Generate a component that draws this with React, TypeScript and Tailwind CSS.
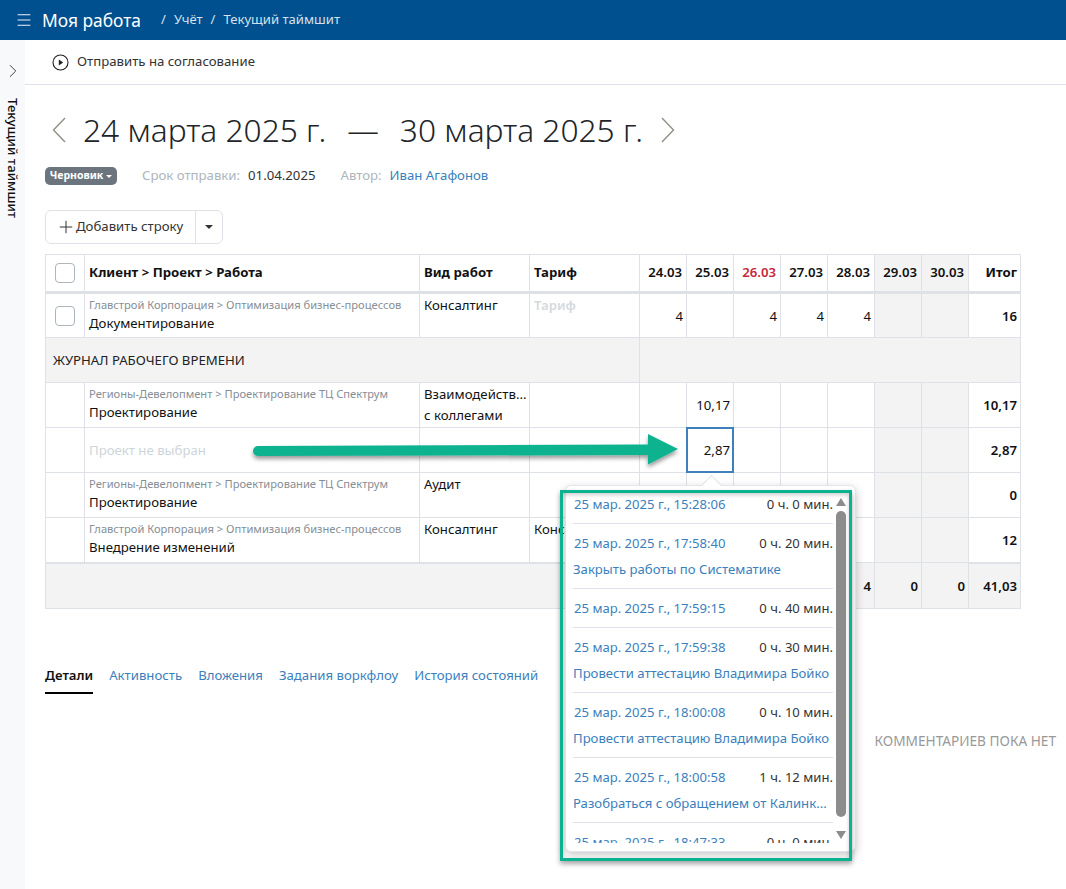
import React from "react";
import { Menu, ChevronRight, Plus } from "lucide-react";

const dayCols = ["24.03", "25.03", "26.03", "27.03", "28.03", "29.03", "30.03"];
const weekendBg = (i: number) => (i >= 5 ? "bg-[#f3f3f4]" : "");

function Box() {
  return <span className="block w-5 h-5 mx-auto rounded-[4px] border border-[#adb5bd] bg-white" />;
}

function Day({ i, v }: { i: number; v?: string }) {
  return (
    <td className={`border border-[#dee2e6] pl-1 pr-[3px] pt-[2px] align-middle text-right text-[13.2px] ${weekendBg(i)}`}>
      {v}
    </td>
  );
}

type RowData = {
  crumb?: string;
  work?: string;
  empty?: boolean;
  kind?: React.ReactNode;
  rate?: React.ReactNode;
  days: (string | undefined)[];
  total: string;
  check?: boolean;
  last?: boolean;
};

function Row({ r }: { r: RowData }) {
  const bottom = r.last ? "border-b-[2px]" : "";
  return (
    <tr className="h-[45px]">
      <td className={`border border-[#dee2e6] ${bottom}`}>{r.check && <Box />}</td>
      <td className={`border border-[#dee2e6] px-1 align-top overflow-hidden ${bottom}`}>
        {r.empty ? (
          <div className="pt-[13px] text-[13.2px] leading-[18px] text-[#ced4da]">Проект не выбран</div>
        ) : (
          <div className="pt-[2px]">
            <div className="text-[11.15px] leading-[18px] text-[#868e96] whitespace-nowrap">{r.crumb}</div>
            <div className="text-[13.2px] leading-[19px] text-[#111] whitespace-nowrap">{r.work}</div>
          </div>
        )}
      </td>
      <td className={`border border-[#dee2e6] px-1 pt-[1px] align-top text-[13.2px] leading-[21px] text-[#111] overflow-hidden ${bottom}`}>{r.kind}</td>
      <td className={`border border-[#dee2e6] px-1 pt-[1px] align-top text-[13.2px] leading-[21px] overflow-hidden whitespace-nowrap ${bottom}`}>{r.rate}</td>
      {r.days.map((d, i) => (
        <Day key={i} i={i} v={d} />
      ))}
      <td className={`border border-[#dee2e6] pl-1 pr-[3px] pt-[2px] text-right text-[13.2px] font-semibold text-[#111] ${bottom}`}>{r.total}</td>
    </tr>
  );
}

const entries: { date: string; dur: string; title?: string }[] = [
  { date: "25 мар. 2025 г., 15:28:06", dur: "0 ч. 0 мин." },
  { date: "25 мар. 2025 г., 17:58:40", dur: "0 ч. 20 мин.", title: "Закрыть работы по Систематике" },
  { date: "25 мар. 2025 г., 17:59:15", dur: "0 ч. 40 мин." },
  { date: "25 мар. 2025 г., 17:59:38", dur: "0 ч. 30 мин.", title: "Провести аттестацию Владимира Бойко" },
  { date: "25 мар. 2025 г., 18:00:08", dur: "0 ч. 10 мин.", title: "Провести аттестацию Владимира Бойко" },
  { date: "25 мар. 2025 г., 18:00:58", dur: "1 ч. 12 мин.", title: "Разобраться с обращением от Калинк..." },
  { date: "25 мар. 2025 г., 18:47:33", dur: "0 ч. 0 мин." },
];

function Popup() {
  return (
    <div className="absolute left-[565px] top-[485px] w-[291px] h-[367px] bg-white rounded-md border border-[#e3e6ea] shadow-[0_3px_10px_rgba(0,0,0,0.22)]">
      <div className="absolute left-[138px] top-[-8px] w-[15px] h-[15px] rotate-45 bg-white border-l border-t border-[#dee2e6]" />
      <div className="relative h-[357px] overflow-hidden pl-[7px] pr-[22px]">
        {entries.map((e, i) => (
          <div key={i} className={i ? "border-t border-[#dee2e6] pt-[9px] pb-[8px]" : "pt-[8px] pb-[8px]"}>
            <div className="flex justify-between pl-px text-[13.1px] leading-[21px]">
              <span className="text-[#3b7fbd] whitespace-nowrap">{e.date}</span>
              <span className="text-[#333] whitespace-nowrap">{e.dur}</span>
            </div>
            {e.title && (
              <div className="mt-[5px] text-[13.15px] leading-[21px] text-[#3b7fbd] whitespace-nowrap">{e.title}</div>
            )}
          </div>
        ))}
      </div>
      <div className="absolute right-[9px] top-[25px] w-[10px] h-[306px] rounded-[5px] bg-[#8c8c8c]" />
      <svg className="absolute right-[9px] top-[12px]" width="10" height="8" viewBox="0 0 10 8">
        <path d="M5 0 L10 8 L0 8 Z" fill="#8c8c8c" />
      </svg>
      <svg className="absolute right-[9px] top-[345px]" width="10" height="8" viewBox="0 0 10 8">
        <path d="M5 8 L10 0 L0 0 Z" fill="#8c8c8c" />
      </svg>
    </div>
  );
}

export default function App() {
  const rows: RowData[] = [
    {
      crumb: "Регионы-Девелопмент > Проектирование ТЦ Спектрум",
      work: "Проектирование",
      kind: (
        <>
          <div>Взаимодейств...</div>
          <div>с коллегами</div>
        </>
      ),
      days: [undefined, "10,17"],
      total: "10,17",
    },
    { empty: true, days: [undefined, "2,87"], total: "2,87" },
    {
      crumb: "Регионы-Девелопмент > Проектирование ТЦ Спектрум",
      work: "Проектирование",
      kind: "Аудит",
      days: [],
      total: "0",
    },
    {
      crumb: "Главстрой Корпорация > Оптимизация бизнес-процессов",
      work: "Внедрение изменений",
      kind: "Консалтинг",
      rate: "Консалтинг",
      days: [],
      total: "12",
      last: true,
    },
  ];
  const pad = (d: (string | undefined)[]) => [...d, ...Array(7 - d.length).fill(undefined)];

  return (
    <div className="relative flex h-[889px] w-[1066px] overflow-hidden flex-col bg-white text-[#111] font-['Noto_Sans','Open_Sans',sans-serif]">
      <header className="flex h-10 shrink-0 items-center bg-[#004f8f] pl-[15px] text-white">
        <Menu size={18} strokeWidth={1.25} />
        <span className="ml-[9px] text-[17.4px]">Моя работа</span>
        <span className="ml-[20px] text-[13.1px] text-[#d5e1ec]">/</span>
        <span className="ml-2 text-[13.1px] text-[#d5e1ec]">Учёт</span>
        <span className="ml-2 text-[13.1px] text-[#d5e1ec]">/</span>
        <span className="ml-2 text-[13.1px] text-[#d5e1ec]">Текущий таймшит</span>
      </header>

      <div className="flex flex-1 min-h-0">
        <aside className="flex w-[25px] shrink-0 flex-col items-center bg-[#f8f9fa] pt-[20px]">
          <ChevronRight size={22} strokeWidth={1} className="text-[#333]" />
          <span className="mt-[16px] -ml-[1px] text-[13.2px] font-medium text-[#111] whitespace-nowrap [writing-mode:vertical-rl]">Текущий таймшит</span>
        </aside>

        <main className="flex-1 min-w-0">
          <div className="flex h-[45px] items-center border-b border-[#dee2e6] pl-[27px]">
            <svg width="17" height="17" viewBox="0 0 17 17" fill="none">
              <circle cx="8.5" cy="8.5" r="7.5" stroke="#222" strokeWidth="1.1" />
              <path d="M6.8 5.5 L11.2 8.5 L6.8 11.5 Z" fill="#222" />
            </svg>
            <span className="ml-2 text-[13.2px] text-[#333]">Отправить на согласование</span>
          </div>

          <div className="pl-5 pr-[45px]">
            <div className="mt-[27px] flex h-[36px] items-center">
              <svg className="ml-[7px]" width="14" height="26" viewBox="0 0 14 26" fill="none">
                <path d="M13 1 L1.5 13 L13 25" stroke="#8f8f86" strokeWidth="1.4" />
              </svg>
              <h1 className="ml-[17px] flex text-[31.7px] font-light leading-[36px] whitespace-nowrap text-[#212529]">
                <span>24 марта 2025 г.</span>
                <span className="ml-[21px]">—</span>
                <span className="ml-[21px]">30 марта 2025 г.</span>
              </h1>
              <svg className="ml-[18px]" width="14" height="26" viewBox="0 0 14 26" fill="none">
                <path d="M1 1 L12.5 13 L1 25" stroke="#8f8f86" strokeWidth="1.4" />
              </svg>
            </div>

            <div className="mt-[16px] flex h-[24px] items-center text-[13.2px]">
              <span className="flex h-[18px] w-[72px] items-center justify-center gap-[3px] rounded-[5px] bg-[#6c757d] text-[10.5px] font-bold text-white">
                Черновик
                <span className="h-0 w-0 border-x-[3px] border-t-[3px] border-x-transparent border-t-white" />
              </span>
              <span className="ml-[25px] text-[#adb5bd]">Срок отправки:</span>
              <span className="ml-2 text-[#333]">01.04.2025</span>
              <span className="ml-[25px] text-[#adb5bd]">Автор:</span>
              <span className="ml-2 text-[#3b7fbd]">Иван Агафонов</span>
            </div>

            <div className="mt-[22px] inline-flex h-[34px] rounded-md border border-[#dee2e6] text-[13.2px] text-[#333]">
              <span className="flex w-[149px] items-center pl-[10px]">
                <Plus size={20} strokeWidth={1.2} />
                Добавить строку
              </span>
              <span className="flex w-[27px] items-center justify-center border-l border-[#dee2e6]">
                <span className="h-0 w-0 border-x-[4px] border-t-[4px] border-x-transparent border-t-[#333]" />
              </span>
            </div>

            <table className="mt-[10px] w-[975px] table-fixed border-collapse">
              <colgroup>
                <col className="w-[39px]" />
                <col className="w-[335px]" />
                <col className="w-[110px]" />
                <col className="w-[110px]" />
                <col className="w-[47px]" />
                <col className="w-[47px]" />
                <col className="w-[47px]" />
                <col className="w-[47px]" />
                <col className="w-[47px]" />
                <col className="w-[47px]" />
                <col className="w-[47px]" />
                <col className="w-[52px]" />
              </colgroup>
              <thead>
                <tr className="h-[38px] text-[13.2px] font-semibold">
                  <th className="border border-b-[3px] border-[#dee2e6]"><Box /></th>
                  <th className="border border-b-[3px] border-[#dee2e6] px-1 text-left">Клиент &gt; Проект &gt; Работа</th>
                  <th className="border border-b-[3px] border-[#dee2e6] px-1 text-left">Вид работ</th>
                  <th className="border border-b-[3px] border-[#dee2e6] px-1 text-left">Тариф</th>
                  {dayCols.map((d, i) => (
                    <th key={d} className={`border border-b-[3px] border-[#dee2e6] px-1 text-right font-semibold ${i === 2 ? "text-[#c5283d]" : ""} ${weekendBg(i)}`}>{d}</th>
                  ))}
                  <th className="border border-b-[3px] border-[#dee2e6] pl-1 pr-[3px] text-right">Итог</th>
                </tr>
              </thead>
              <tbody>
                <Row
                  r={{
                    check: true,
                    crumb: "Главстрой Корпорация > Оптимизация бизнес-процессов",
                    work: "Документирование",
                    kind: "Консалтинг",
                    rate: <span className="font-semibold text-[#d5d9dd]">Тариф</span>,
                    days: ["4", undefined, "4", "4", "4", undefined, undefined],
                    total: "16",
                  }}
                />
                <tr className="h-[45px] bg-[#f3f3f4]">
                  <td colSpan={4} className="border border-[#dee2e6] pl-[7px] pt-[1px] text-[13.2px] text-[#222]">ЖУРНАЛ РАБОЧЕГО ВРЕМЕНИ</td>
                  <td colSpan={8} className="border border-[#dee2e6]" />
                </tr>
                {rows.map((r, i) => (
                  <Row key={i} r={{ ...r, days: pad(r.days) }} />
                ))}
                <tr className="h-[46px] bg-[#f3f3f4] text-right text-[13.2px] font-semibold">
                  <td colSpan={4} className="border border-[#dee2e6]" />
                  <td className="border border-[#dee2e6] pr-[3px]" />
                  <td className="border border-[#dee2e6] pr-[3px]" />
                  <td className="border border-[#dee2e6] pr-[3px]" />
                  <td className="border border-[#dee2e6] pr-[3px]" />
                  <td className="border border-[#dee2e6] pr-[3px] pt-[3px]">4</td>
                  <td className="border border-[#dee2e6] pr-[3px] pt-[3px]">0</td>
                  <td className="border border-[#dee2e6] pr-[3px] pt-[3px]">0</td>
                  <td className="border border-[#dee2e6] pr-[3px] pt-[3px]">41,03</td>
                </tr>
              </tbody>
            </table>

            <nav className="mt-[57px] flex gap-4 text-[13.2px] text-[#3b7fbd]">
              <span className="border-b-2 border-black pb-[6px] font-semibold text-[#111]">Детали</span>
              <span>Активность</span>
              <span>Вложения</span>
              <span>Задания воркфлоу</span>
              <span>История состояний</span>
            </nav>

            <div className="mt-[37px] flex justify-end -mr-[35px]">
              <span className="text-[13.65px] text-[#999]">КОММЕНТАРИЕВ ПОКА НЕТ</span>
            </div>
          </div>
        </main>
      </div>

      {/* selected cell */}
      <div className="absolute left-[686px] top-[427px] h-[46px] w-[48px] border-2 border-[#3f7fbb]" />

      <Popup />

      {/* annotations */}
      <div className="absolute left-[560px] top-[490px] h-[371px] w-[292px] border-[3px] border-[#0ab28f] shadow-[0_3px_5px_rgba(0,0,0,0.35),inset_0_2px_4px_rgba(0,0,0,0.2)]" />
      <svg className="absolute left-[245px] top-[425px]" width="445" height="50" viewBox="0 0 445 50">
        <defs>
          <filter id="s" x="-5%" y="-30%" width="110%" height="180%">
            <feDropShadow dx="0" dy="3" stdDeviation="2" floodColor="#000" floodOpacity="0.4" />
          </filter>
        </defs>
        <path d="M13 21 L403 19.5 L403 9 L433 24 L403 39.5 L403 30 L13 31 A5 5 0 0 1 13 21 Z" fill="#0ab28f" filter="url(#s)" />
      </svg>
    </div>
  );
}
